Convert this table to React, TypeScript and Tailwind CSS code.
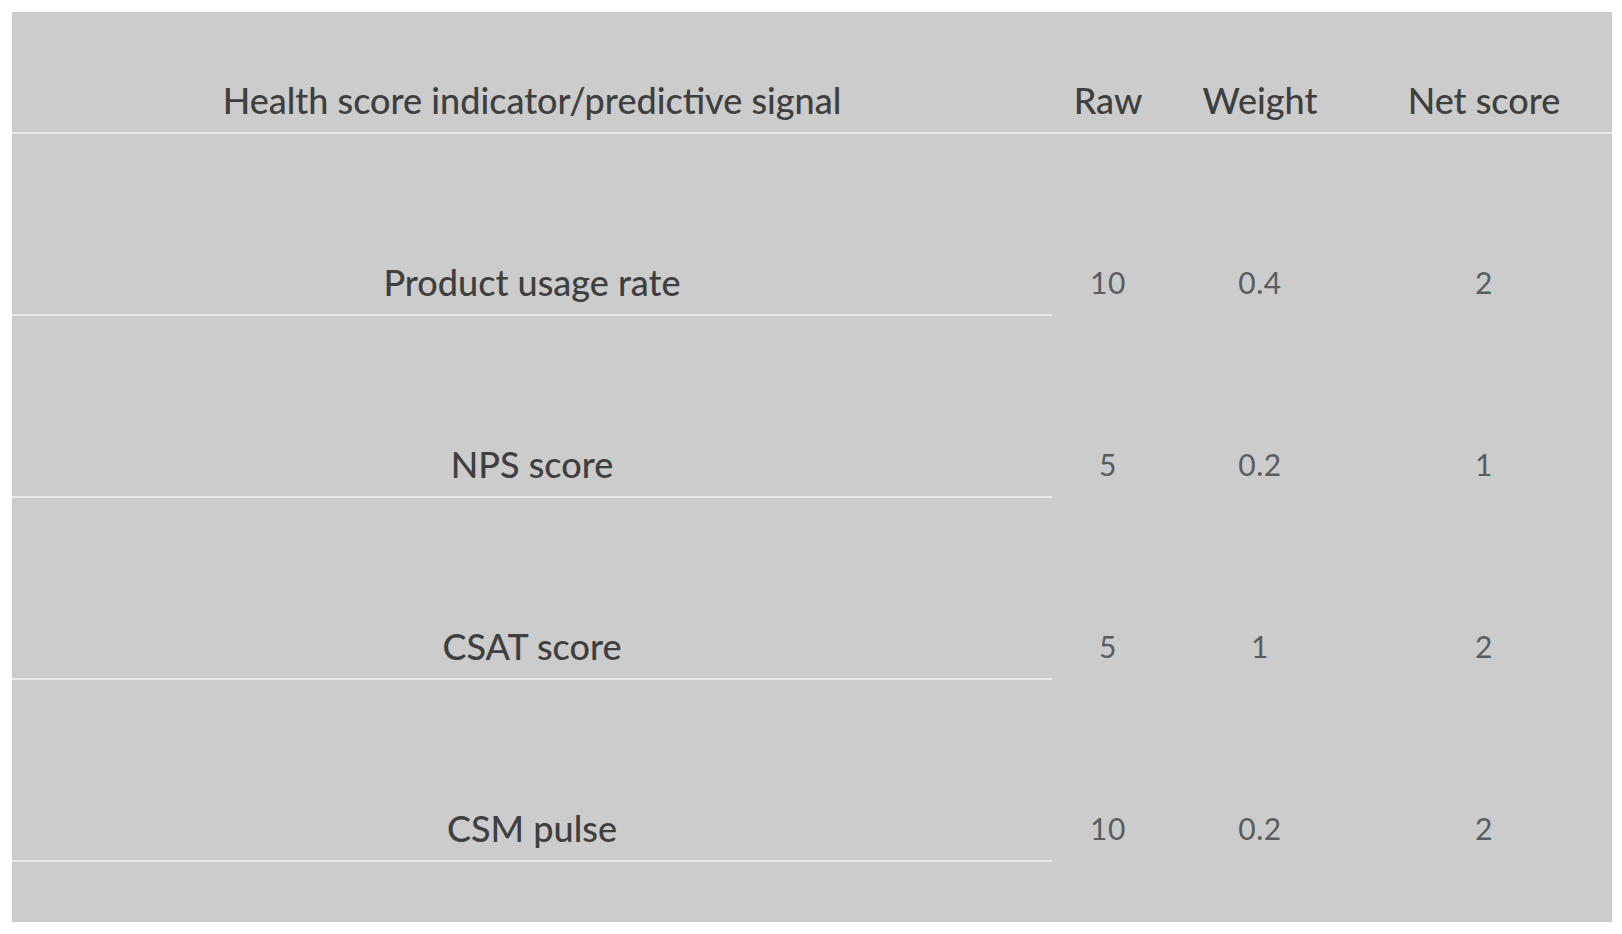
import React from "react";

const rows = [
  { label: "Product usage rate", raw: "10", weight: "0.4", net: "2" },
  { label: "NPS score", raw: "5", weight: "0.2", net: "1" },
  { label: "CSAT score", raw: "5", weight: "1", net: "2" },
  { label: "CSM pulse", raw: "10", weight: "0.2", net: "2" },
];

const cols = "grid grid-cols-[1040px_112px_192px_256px]";

export default function App() {
  return (
    <div className="min-h-screen bg-white p-3 font-['Lato',sans-serif]">
      <div className="w-[1600px] h-[910px] bg-[#cccccc]">
        {/* header */}
        <div className={`${cols} h-[122px] border-b-2 border-[#e9e9e9] text-[36px] font-medium text-[#3f3f3f] leading-[44px]`}>
          <div className="flex items-end justify-center pb-[10px]">Health score indicator/predictive signal</div>
          <div className="flex items-end justify-center pb-[10px]">Raw</div>
          <div className="flex items-end justify-center pb-[10px]">Weight</div>
          <div className="flex items-end justify-center pb-[10px]">Net score</div>
        </div>

        {rows.map((r) => (
          <div key={r.label} className={`${cols} h-[182px]`}>
            <div className="flex items-end justify-center pb-[10px] border-b-2 border-[#e9e9e9] text-[36px] font-medium text-[#3f3f3f] leading-[44px]">
              {r.label}
            </div>
            <div className="flex items-end justify-center pb-[14px] text-[30px] tracking-[0.5px] text-[#585d61] leading-[40px]">{r.raw}</div>
            <div className="flex items-end justify-center pb-[14px] text-[30px] tracking-[0.5px] text-[#585d61] leading-[40px]">{r.weight}</div>
            <div className="flex items-end justify-center pb-[14px] text-[30px] tracking-[0.5px] text-[#585d61] leading-[40px]">{r.net}</div>
          </div>
        ))}
      </div>
    </div>
  );
}
